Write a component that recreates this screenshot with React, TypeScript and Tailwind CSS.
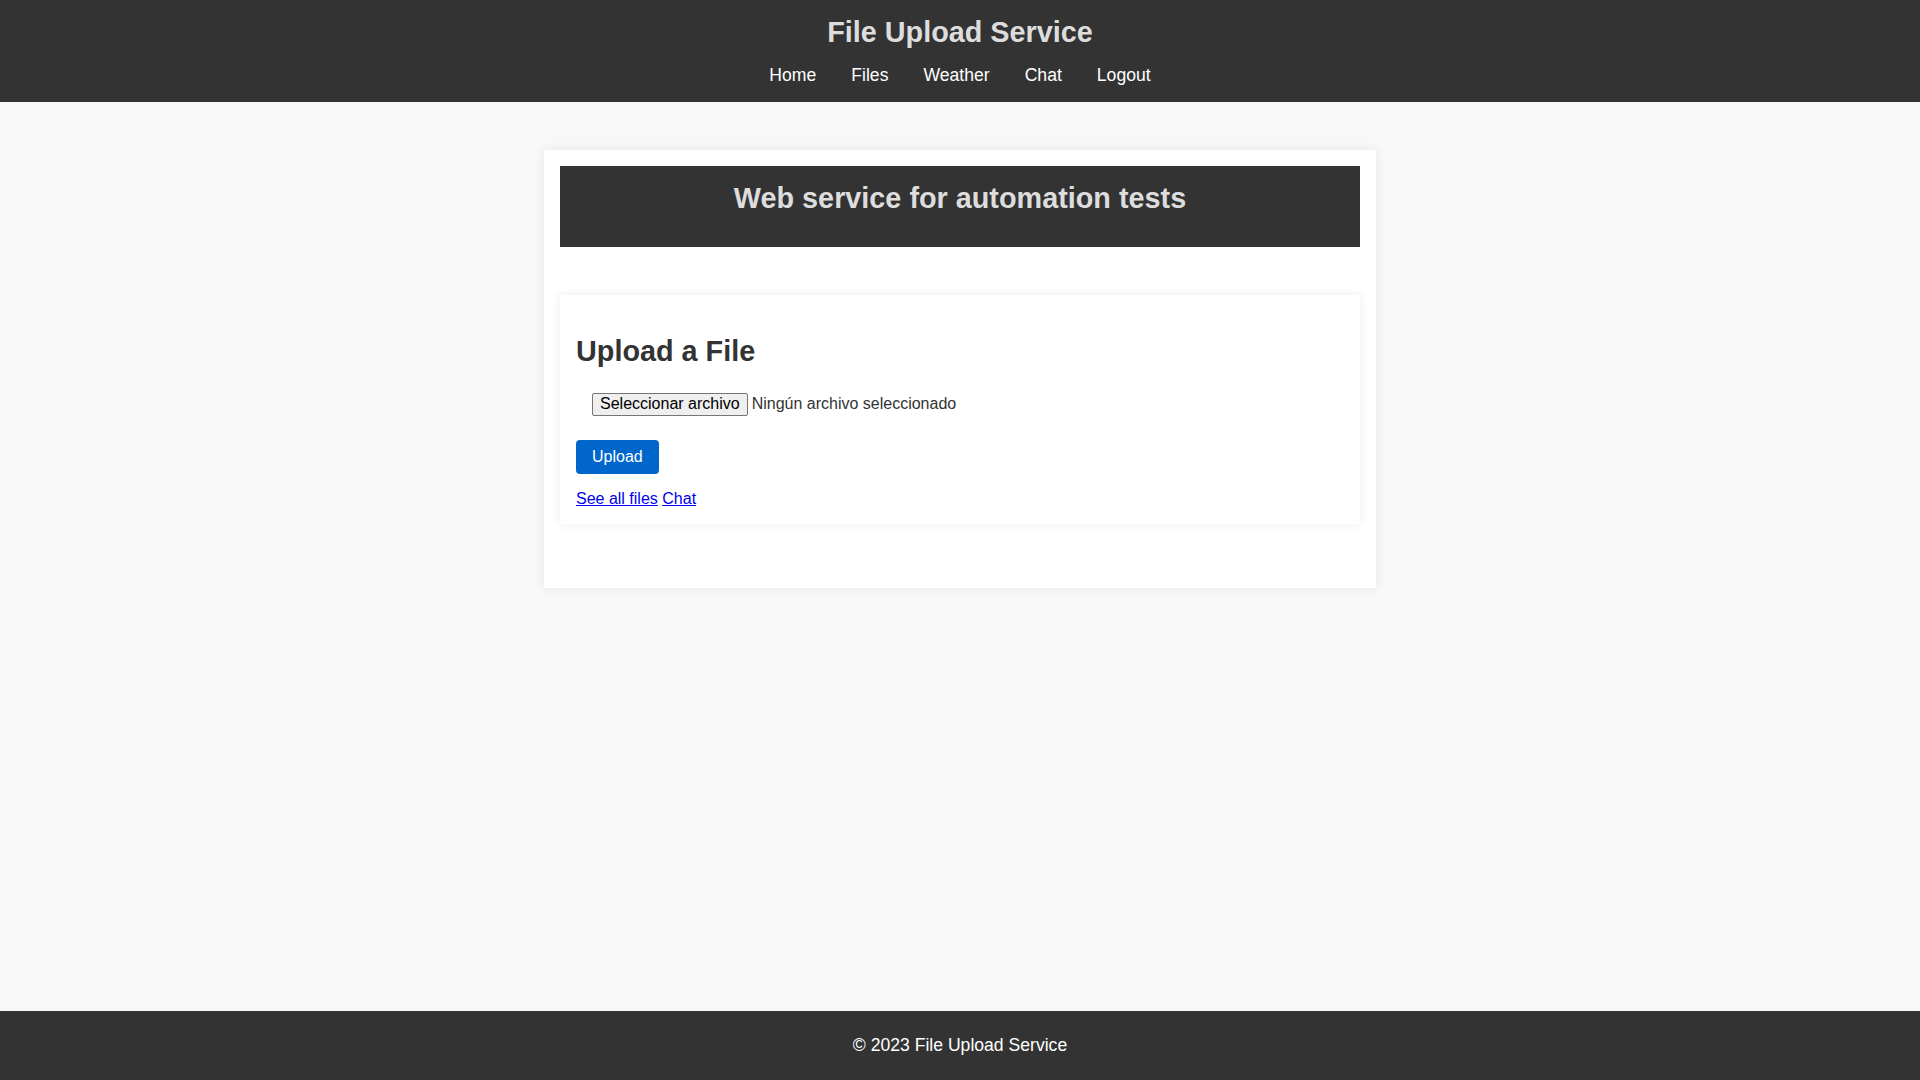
import React from 'react';

const navLinks = ['Home', 'Files', 'Weather', 'Chat', 'Logout'];

export default function App() {
  return (
    <div className="min-h-screen flex flex-col bg-[#f8f8f8] font-['Liberation_Sans',Arial,sans-serif]">
      {/* Header */}
      <header className="bg-[#333333] pt-4 pb-[17px] text-center">
        <h1 className="text-[28.8px] leading-[33px] font-bold text-[#dddddd]">File Upload Service</h1>
        <nav className="mt-[16px] flex justify-center gap-[35px] text-[17.6px] leading-[20px] text-white">
          {navLinks.map((link) => (
            <a key={link} href="#" className="text-white no-underline">
              {link}
            </a>
          ))}
        </nav>
      </header>

      {/* Main */}
      <main className="flex-1 pt-12">
        <div className="w-[832px] mx-auto bg-white p-4 shadow-[0_0_10px_rgba(0,0,0,0.08)]">
          <div className="h-[81px] bg-[#333333] pt-4 text-center">
            <h1 className="text-[28.8px] leading-[33px] font-bold text-[#dddddd]">
              Web service for automation tests
            </h1>
          </div>

          <div className="mt-12 mb-12 bg-white p-4 shadow-[0_0_10px_rgba(0,0,0,0.08)]">
            <h2 className="mt-6 mb-6 text-[28.8px] leading-[33px] font-bold text-[#333333]">Upload a File</h2>

            <div className="ml-4 flex items-center h-[24px] text-base">
              <button className="h-[23px] px-[7px] border border-[#767676] bg-[#efefef] rounded-[2px] text-black leading-[20px]">
                Seleccionar archivo
              </button>
              <span className="ml-[4px] text-[#333333]">Ningún archivo seleccionado</span>
            </div>

            <button className="mt-6 h-[34px] px-4 bg-[#0066cc] text-white text-base rounded">
              Upload
            </button>

            <div className="mt-[16px] text-base leading-[18px]">
              <a href="#" className="text-[#0000ee] underline">See all files</a>{' '}
              <a href="#" className="text-[#0000ee] underline">Chat</a>
            </div>
          </div>
        </div>
      </main>

      {/* Footer */}
      <footer className="bg-[#333333] py-6 text-center text-[17.6px] leading-[21px] text-white">
        © 2023 File Upload Service
      </footer>
    </div>
  );
}
